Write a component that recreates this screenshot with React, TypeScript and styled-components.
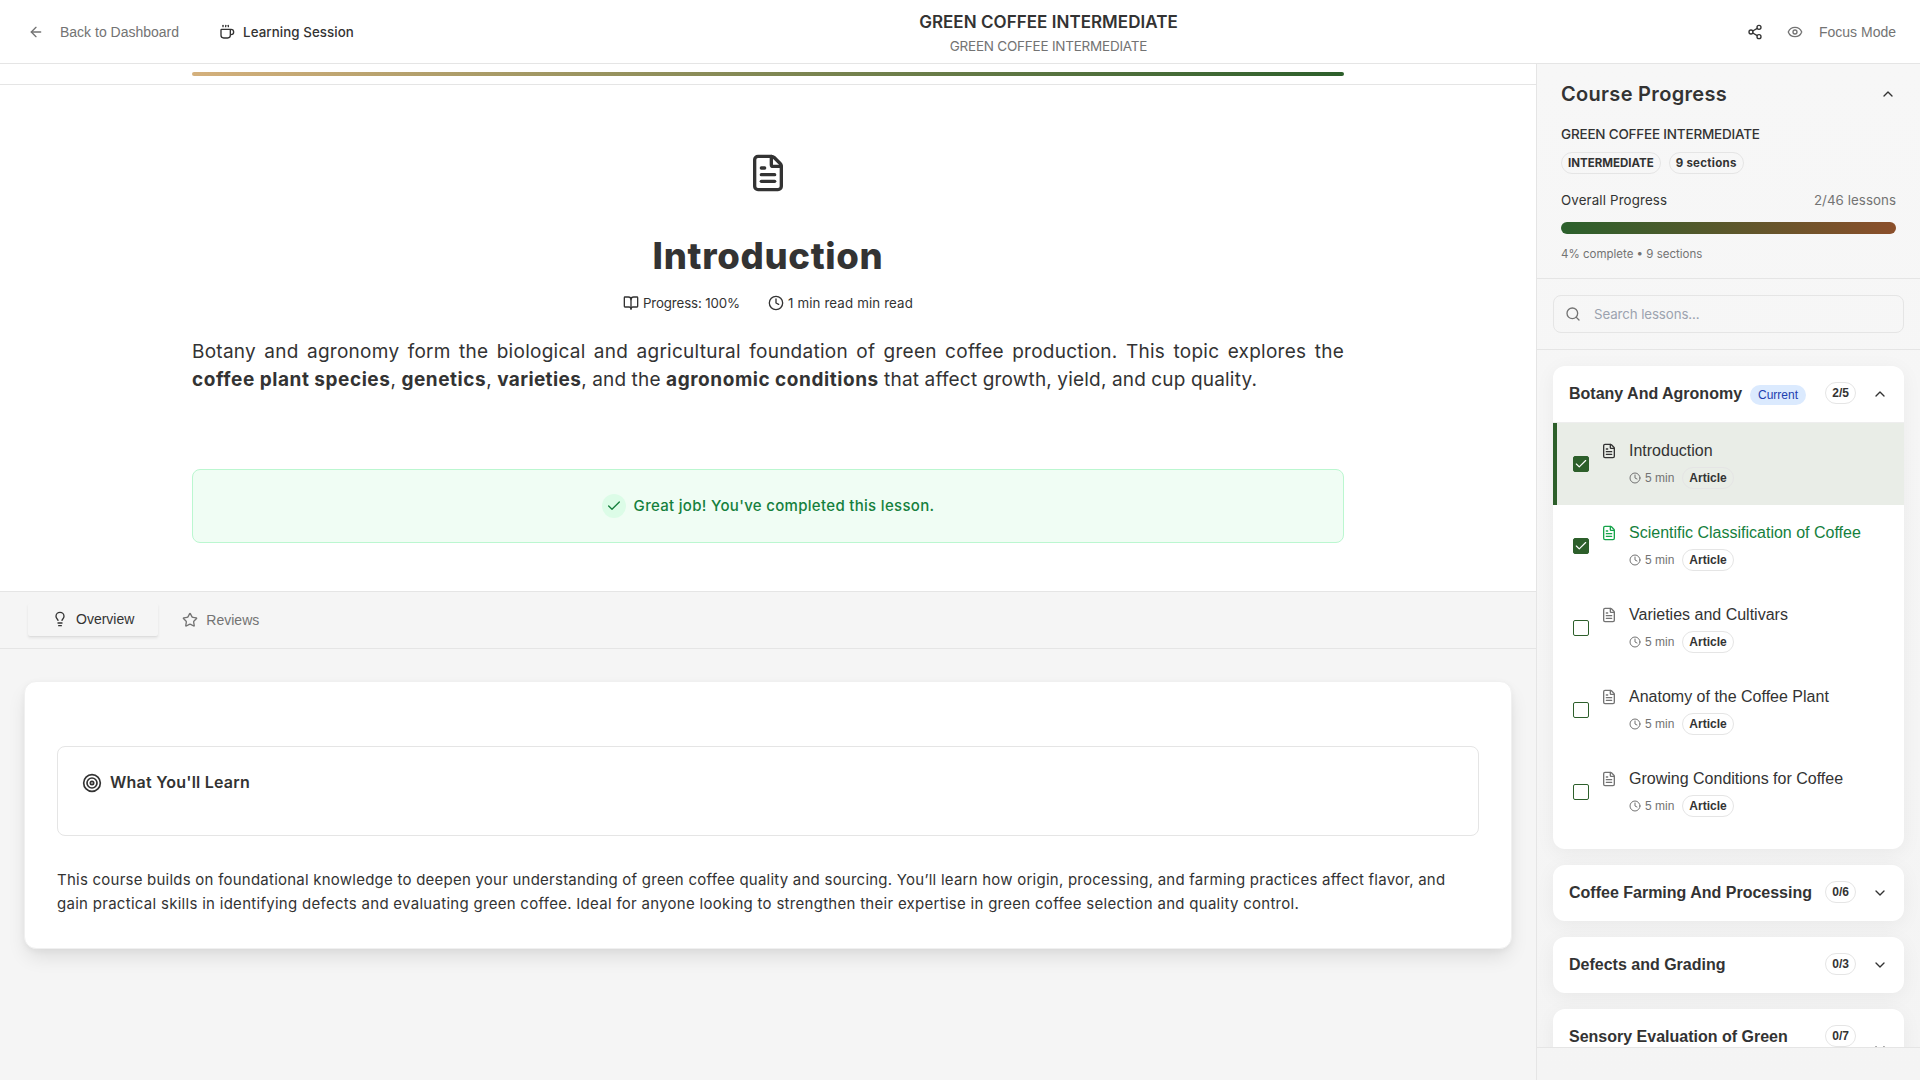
import React from "react";
import styled, { createGlobalStyle, css } from "styled-components";
import {
  ArrowLeft,
  BookOpen,
  Check,
  ChevronDown,
  ChevronUp,
  Clock,
  Coffee,
  Eye,
  FileText,
  Lightbulb,
  Search,
  Share2,
  Star,
  Target,
} from "lucide-react";

const color = {
  ink: "#333333",
  muted: "#737373",
  line: "#e5e5e5",
  surface: "#f5f5f5",
  green: "#2d5f2b",
};
const sans = `Inter, "Open Sans", sans-serif`;
const arial = `"Liberation Sans", Arial, sans-serif`;

const GlobalStyle = createGlobalStyle`
  *, *::before, *::after { box-sizing: border-box; }
  body { margin: 0; background: #fff; color: ${color.ink}; font-family: ${sans}; overflow: hidden; }
  h1, h2, h3, h4, p { margin: 0; }
  button { border: 0; background: none; padding: 0; font: inherit; color: inherit; }
  svg { display: block; flex: none; }
`;

/* Text run with its own tracking, in hundredths of a pixel per glyph */
const Run = styled.span<{ $ls?: number; $bold?: boolean }>`
  letter-spacing: ${(p) => (p.$ls ?? 0) / 100}px;
  font-weight: ${(p) => (p.$bold ? 700 : "inherit")};
  white-space: nowrap;
`;

const Page = styled.div`
  display: flex;
  flex-direction: column;
  width: 100%;
  height: 100vh;
`;

const Header = styled.header`
  flex: none;
  display: flex;
  align-items: center;
  justify-content: space-between;
  height: 64px;
  padding: 1px 24px 0 28px;
  background: #fff;
  border-bottom: 1px solid ${color.line};
`;
const HeaderLeft = styled.div`
  display: flex;
  align-items: center;
  gap: 40px;
`;
const TextButton = styled.button`
  display: flex;
  align-items: center;
  gap: 16px;
  color: ${color.muted};
  font: 400 14px/20px ${arial};
`;
const SessionLabel = styled.div`
  display: flex;
  align-items: center;
  gap: 8px;
  font: 500 13.3px/20px ${sans};
`;
const HeaderTitle = styled.div`
  display: flex;
  flex-direction: column;
  align-items: center;
`;
const CourseName = styled.h1`
  font: 600 17px/28px ${sans};
`;
const CourseSub = styled.p`
  font: 400 13.5px/20px ${sans};
  color: ${color.muted};
`;
const HeaderRight = styled.div`
  display: flex;
  align-items: center;
  gap: 24px;
  padding-left: 4px;
`;

const Body = styled.div`
  flex: 1;
  min-height: 0;
  display: flex;
`;
const Main = styled.main`
  flex: 1;
  min-width: 0;
  display: flex;
  flex-direction: column;
  background: ${color.surface};
`;

const ReadingStrip = styled.div`
  height: 21px;
  padding: 8px 192px;
  background: #fff;
  border-bottom: 1px solid ${color.line};
`;
const ReadingBar = styled.div`
  height: 4px;
  border-radius: 2px;
  background: linear-gradient(90deg, #d4b07c, ${color.green});
`;

const Lesson = styled.section`
  display: flex;
  flex-direction: column;
  height: 507px;
  padding: 68px 192px 48px;
  background: #fff;
  border-bottom: 1px solid ${color.line};
`;
const LessonHead = styled.div`
  display: flex;
  flex-direction: column;
  align-items: center;
`;
const LessonTitle = styled.h2`
  margin: 43px 0 17px;
  font: 800 36.5px/40px ${sans};
`;
const LessonMeta = styled.div`
  display: flex;
  gap: 28px;
`;
const MetaItem = styled.div`
  display: flex;
  align-items: center;
  gap: 4px;
  font: 400 13.3px/20px ${sans};
`;
const Lead = styled.p`
  margin-top: 25px;
  font: 400 19px/28px ${sans};
`;
const LeadLine = styled.span<{ $justify?: boolean }>`
  display: block;
  letter-spacing: ${(p) => (p.$justify ? 0.26 : 0.2)}px;
  word-spacing: ${(p) => (p.$justify ? 0 : -0.25)}px;
  white-space: ${(p) => (p.$justify ? "normal" : "nowrap")};
  text-align-last: ${(p) => (p.$justify ? "justify" : "left")};
`;
const DoneBanner = styled.div`
  display: flex;
  align-items: center;
  justify-content: center;
  gap: 8px;
  height: 74px;
  margin-top: auto;
  border: 1px solid #bbf7d0;
  border-radius: 8px;
  background: #f0fdf4;
  color: #15803d;
  font: 500 15px/24px ${sans};
`;
const DoneMark = styled.span`
  display: grid;
  place-items: center;
  width: 24px;
  height: 24px;
  border-radius: 50%;
  background: #dcfce7;
`;

const Tabs = styled.nav`
  display: flex;
  align-items: center;
  height: 57px;
  padding-left: 28px;
  border-bottom: 1px solid ${color.line};
`;
const Tab = styled.button<{ $active?: boolean }>`
  display: flex;
  align-items: center;
  gap: 8px;
  height: 33px;
  padding: 0 24px;
  border-radius: 2px;
  color: ${color.muted};
  font: 400 14px/20px ${arial};
  ${(p) =>
    p.$active &&
    css`
      color: ${color.ink};
      transform: translateY(-1px);
      background: #f5f5f5;
      box-shadow: 0 2px 3px rgba(0, 0, 0, 0.08), 0 1px 1px rgba(0, 0, 0, 0.03);
    `}
`;

const OverviewCard = styled.section`
  display: flex;
  flex-direction: column;
  gap: 32px;
  height: 268px;
  margin: 32px 24px 0;
  padding: 64px 32px 32px;
  border: 1px solid #f0f0f0;
  border-radius: 12px;
  background: #fff;
  box-shadow: 0 10px 20px -3px rgba(0, 0, 0, 0.11), 0 2px 6px rgba(0, 0, 0, 0.04);
`;
const LearnBox = styled.div`
  height: 90px;
  padding: 24px;
  border: 1px solid ${color.line};
  border-radius: 8px;
`;
const LearnTitle = styled.h3`
  display: flex;
  align-items: center;
  gap: 8px;
  font: 600 16px/22px ${sans};
  height: 24px;
`;
const LearnLabel = styled(Run)`
  padding-bottom: 2px;
`;
const Description = styled.p`
  display: flex;
  flex-direction: column;
  font: 400 15px/24px ${sans};
`;

const Sidebar = styled.aside`
  flex: none;
  display: flex;
  flex-direction: column;
  width: 384px;
  border-left: 1px solid ${color.line};
  background: linear-gradient(#f7f7f7, #f4f4f4);
`;
const ProgressPanel = styled.section`
  height: 215px;
  padding: 16px 24px;
  border-bottom: 1px solid ${color.line};
`;
const Between = styled.div`
  display: flex;
  align-items: center;
  justify-content: space-between;
`;
const PanelTitle = styled.h2`
  font: 600 20px/28px ${sans};
`;
const PanelCourse = styled.h3`
  margin: 16px 0 8px;
  font: 500 13.5px/20px ${sans};
`;
const BadgeRow = styled.div`
  display: flex;
  gap: 8px;
`;
const Badge = styled.span<{ $arial?: boolean }>`
  flex: none;
  height: 22px;
  padding: 2px 6px;
  border: 1px solid ${color.line};
  border-radius: 11px;
  white-space: nowrap;
  font: ${(p) => (p.$arial ? `700 12px/16px ${arial}` : `700 11.5px/16px ${sans}`)};
`;
const Overall = styled(Between)`
  margin: 16px 0 12px;
  font: 400 13.3px/20px ${sans};
`;
const Count = styled.span`
  color: ${color.muted};
`;
const OverallBar = styled.div`
  height: 12px;
  border-radius: 6px;
  background: linear-gradient(90deg, #2b602c, #8b4f2b);
`;
const Caption = styled.p`
  margin-top: 12px;
  color: ${color.muted};
  font: 400 11.5px/16px ${sans};
`;
const SearchPanel = styled.div`
  height: 71px;
  padding: 16px;
  border-bottom: 1px solid ${color.line};
`;
const SearchBox = styled.div`
  display: flex;
  align-items: center;
  gap: 13px;
  height: 38px;
  padding-left: 11px;
  border: 1px solid ${color.line};
  border-radius: 8px;
  color: ${color.muted};
  font: 400 13.3px/20px ${sans};
`;
const Placeholder = styled.span`
  color: #9ca3af;
`;
const SectionList = styled.div`
  flex: 1;
  min-height: 0;
  display: flex;
  flex-direction: column;
  gap: 16px;
  padding: 16px 16px 0;
  overflow: hidden;
`;
const SidebarFoot = styled.div`
  height: 33px;
  border-top: 1px solid ${color.line};
`;
const SectionCard = styled.section`
  flex: none;
  overflow: hidden;
  border-radius: 12px;
  background: #fff;
  box-shadow: 0 4px 20px rgba(0, 0, 0, 0.05);
`;
const SectionHead = styled.div<{ $tall?: boolean; $open?: boolean }>`
  display: flex;
  height: ${(p) => (p.$tall ? 80 : p.$open ? 57 : 56)}px;
  padding: 16px;
  border-bottom: ${(p) => (p.$open ? "1px solid #eeeeee" : "0")};
`;
const SectionTitle = styled.h4`
  flex: 1;
  display: flex;
  gap: 8px;
  white-space: nowrap;
  font: 700 16px/24px ${arial};
`;
const CurrentPill = styled.span`
  height: 20px;
  margin-top: 3px;
  padding: 2px 8px;
  border-radius: 10px;
  background: #dbeafe;
  color: #1e40af;
  font: 400 12px/16px ${arial};
`;
const Chevron = styled.span`
  display: grid;
  place-items: center;
  height: 100%;
  margin-left: 16px;
`;
const Lessons = styled.div`
  padding-bottom: 16px;
`;
const Row = styled.div<{ $active?: boolean }>`
  display: flex;
  align-items: center;
  height: 82px;
  padding: 16px;
  border-left: 4px solid ${(p) => (p.$active ? color.green : "transparent")};
  background: ${(p) => (p.$active ? "#e9ede7" : "transparent")};
`;
const Checkbox = styled.span<{ $on?: boolean }>`
  display: grid;
  place-items: center;
  width: 16px;
  height: 16px;
  border: 1px solid ${color.green};
  border-radius: 2px;
  background: ${(p) => (p.$on ? color.green : "#fff")};
  color: #fff;
`;
const RowIcon = styled.span<{ $tone: string }>`
  align-self: flex-start;
  margin: 4px 12px 0;
  color: ${(p) => p.$tone};
`;
const RowText = styled.div`
  display: flex;
  flex-direction: column;
  gap: 4px;
`;
const RowTitle = styled.span<{ $done?: boolean }>`
  color: ${(p) => (p.$done ? "#15803d" : color.ink)};
  font: 400 16px/24px ${arial};
`;
const RowMeta = styled.span`
  display: flex;
  align-items: center;
  gap: 8px;
`;
const Duration = styled.span`
  display: flex;
  align-items: center;
  gap: 4px;
  color: ${color.muted};
  font: 400 12px/16px ${arial};
`;

type LessonItem = { title: string; done?: boolean; active?: boolean };

const lessons: LessonItem[] = [
  { title: "Introduction", done: true, active: true },
  { title: "Scientific Classification of Coffee", done: true },
  { title: "Varieties and Cultivars" },
  { title: "Anatomy of the Coffee Plant" },
  { title: "Growing Conditions for Coffee" },
];

function LessonRow({ title, done, active }: LessonItem) {
  const tone = active ? color.ink : done ? "#16a34a" : color.muted;
  return (
    <Row $active={active}>
      <Checkbox $on={done}>{done && <Check size={14} strokeWidth={2} />}</Checkbox>
      <RowIcon $tone={tone}>
        <FileText size={16} />
      </RowIcon>
      <RowText>
        <RowTitle $done={done && !active}>{title}</RowTitle>
        <RowMeta>
          <Duration>
            <Clock size={12} />5 min
          </Duration>
          <Badge $arial>Article</Badge>
        </RowMeta>
      </RowText>
    </Row>
  );
}

function Section(props: {
  title: string;
  count: string;
  current?: boolean;
  tall?: boolean;
  children?: React.ReactNode;
}) {
  const { title, count, current, tall, children } = props;
  return (
    <SectionCard>
      <SectionHead $tall={tall} $open={!!children}>
        <SectionTitle>
          {title}
          {current && <CurrentPill>Current</CurrentPill>}
        </SectionTitle>
        <Badge $arial>{count}</Badge>
        <Chevron>{children ? <ChevronUp size={16} /> : <ChevronDown size={16} />}</Chevron>
      </SectionHead>
      {children && <Lessons>{children}</Lessons>}
    </SectionCard>
  );
}

export default function App() {
  return (
    <Page>
      <GlobalStyle />
      <Header>
        <HeaderLeft>
          <TextButton>
            <ArrowLeft size={16} />
            Back to Dashboard
          </TextButton>
          <SessionLabel>
            <Coffee size={16} />
            <Run $ls={8}>Learning Session</Run>
          </SessionLabel>
        </HeaderLeft>
        <HeaderTitle>
          <CourseName>
            <Run $ls={4}>GREEN COFFEE INTERMEDIATE</Run>
          </CourseName>
          <CourseSub>
            <Run $ls={-23}>GREEN COFFEE INTERMEDIATE</Run>
          </CourseSub>
        </HeaderTitle>
        <HeaderRight>
          <Share2 size={16} />
          <TextButton>
            <Eye size={16} />
            Focus Mode
          </TextButton>
        </HeaderRight>
      </Header>

      <Body>
        <Main>
          <ReadingStrip>
            <ReadingBar />
          </ReadingStrip>
          <Lesson>
            <LessonHead>
              <FileText size={40} />
              <LessonTitle>
                <Run $ls={68}>Introduction</Run>
              </LessonTitle>
              <LessonMeta>
                <MetaItem>
                  <BookOpen size={16} />
                  <Run $ls={-13}>Progress: 100%</Run>
                </MetaItem>
                <MetaItem>
                  <Clock size={16} />
                  <Run $ls={14}>1 min read min read</Run>
                </MetaItem>
              </LessonMeta>
            </LessonHead>
            <Lead>
              <LeadLine $justify>
                Botany and agronomy form the biological and agricultural foundation of green coffee
                production. This topic explores the
              </LeadLine>
              <LeadLine>
                <Run $ls={57} $bold>coffee plant species</Run>,{" "}
                <Run $ls={54} $bold>genetics</Run>, <Run $ls={38} $bold>varieties</Run>, and the{" "}
                <Run $ls={57} $bold>agronomic conditions</Run> that affect growth, yield, and cup
                quality.
              </LeadLine>
            </Lead>
            <DoneBanner>
              <DoneMark>
                <Check size={16} />
              </DoneMark>
              <Run $ls={31}>Great job! You've completed this lesson.</Run>
            </DoneBanner>
          </Lesson>

          <Tabs>
            <Tab $active>
              <Lightbulb size={16} />
              Overview
            </Tab>
            <Tab>
              <Star size={16} />
              Reviews
            </Tab>
          </Tabs>

          <OverviewCard>
            <LearnBox>
              <LearnTitle>
                <Target size={20} />
                <LearnLabel $ls={23}>What You'll Learn</LearnLabel>
              </LearnTitle>
            </LearnBox>
            <Description>
              <Run $ls={23.4}>
                This course builds on foundational knowledge to deepen your understanding of green
                coffee quality and sourcing. You’ll learn how origin, processing, and farming
                practices affect flavor, and
              </Run>
              <Run $ls={28.5}>
                gain practical skills in identifying defects and evaluating green coffee. Ideal for
                anyone looking to strengthen their expertise in green coffee selection and quality
                control.
              </Run>
            </Description>
          </OverviewCard>
        </Main>

        <Sidebar>
          <ProgressPanel>
            <Between>
              <PanelTitle>
                <Run $ls={31}>Course Progress</Run>
              </PanelTitle>
              <ChevronUp size={16} />
            </Between>
            <PanelCourse>
              <Run $ls={-20}>GREEN COFFEE INTERMEDIATE</Run>
            </PanelCourse>
            <BadgeRow>
              <Badge>
                <Run $ls={0}>INTERMEDIATE</Run>
              </Badge>
              <Badge>
                <Run $ls={27}>9 sections</Run>
              </Badge>
            </BadgeRow>
            <Overall>
              <Run $ls={15}>Overall Progress</Run>
              <Count>
                <Run $ls={6}>2/46 lessons</Run>
              </Count>
            </Overall>
            <OverallBar />
            <Caption>4% complete • 9 sections</Caption>
          </ProgressPanel>
          <SearchPanel>
            <SearchBox>
              <Search size={16} />
              <Placeholder>
                <Run $ls={-10}>Search lessons...</Run>
              </Placeholder>
            </SearchBox>
          </SearchPanel>
          <SectionList>
            <Section title="Botany And Agronomy" count="2/5" current>
              {lessons.map((l) => (
                <LessonRow key={l.title} {...l} />
              ))}
            </Section>
            <Section title="Coffee Farming And Processing" count="0/6" />
            <Section title="Defects and Grading" count="0/3" />
            <Section title="Sensory Evaluation of Green" count="0/7" tall />
          </SectionList>
          <SidebarFoot />
        </Sidebar>
      </Body>
    </Page>
  );
}
